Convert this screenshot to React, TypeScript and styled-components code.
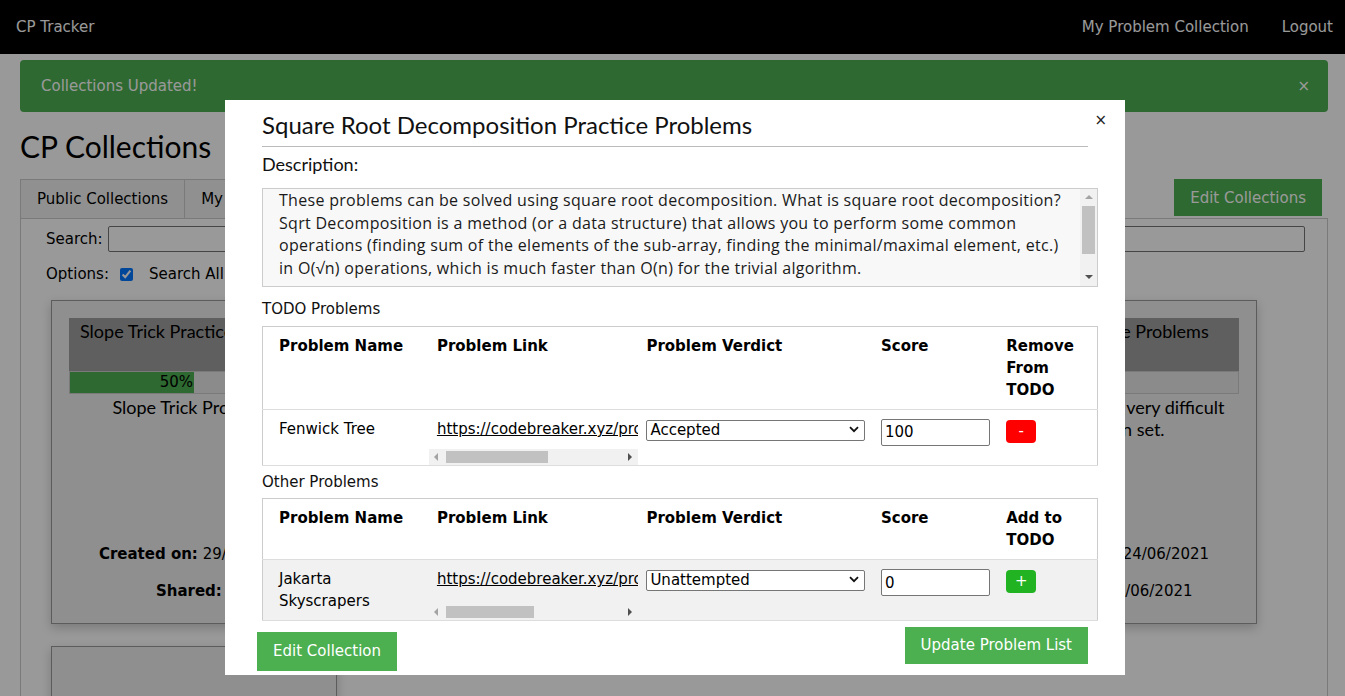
import React from "react";
import styled, { createGlobalStyle } from "styled-components";

const VERDANA = `Verdana, "DejaVu Sans", sans-serif`;
const SEGOE = `"Segoe UI", Lato, "Open Sans", sans-serif`;
const SEGOE_WIDE = `"Segoe UI", "Open Sans", sans-serif`;

const GlobalStyle = createGlobalStyle`
  *, *::before, *::after { box-sizing: border-box; }
  html, body { margin: 0; padding: 0; }
  body {
    font-family: ${VERDANA};
    font-size: 15px;
    line-height: 1.5;
    color: #000;
    background: #fff;
    overflow: hidden;
  }
`;

/* ---------- background page ---------- */

const Page = styled.div`
  width: 1345px;
  height: 696px;
  position: relative;
  overflow: hidden;
`;

const NavBar = styled.header`
  height: 54px;
  background: #000;
  color: #fff;
  display: flex;
  align-items: center;
  padding: 1px 12px 0 16px;
`;

const Brand = styled.span`
  flex: 1;
`;

const NavLinks = styled.nav`
  display: flex;
  gap: 33px;
`;

const NavLink = styled.span``;

const Main = styled.main`
  padding: 6px 17px 0 20px;
`;

const Alert = styled.div`
  height: 52px;
  background: #4caf50;
  color: #fff;
  border-radius: 4px;
  display: flex;
  align-items: center;
  justify-content: space-between;
  padding: 1px 18px 0 21px;
`;

const AlertClose = styled.span``;

const PageTitle = styled.h2`
  font-family: ${SEGOE};
  font-size: 30px;
  font-weight: 400;
  line-height: 36px;
  margin: 16px 0 15px;
`;

const TabRow = styled.div`
  display: flex;
  align-items: flex-start;
  margin-bottom: -1px;
  position: relative;
`;

const Tab = styled.div<{ $first?: boolean }>`
  height: 40px;
  display: flex;
  align-items: center;
  padding: 0 16px;
  background: #f1f1f1;
  border: 1px solid #ccc;
  border-left: ${(p) => (p.$first ? "1px solid #ccc" : "none")};
`;

const TabSpacer = styled.div`
  flex: 1;
`;

const GreenButton = styled.button`
  background: #4caf50;
  color: #fff;
  border: none;
  font-family: ${VERDANA};
  font-size: 15px;
  line-height: 22.5px;
  padding: 7px 16px;
`;

const TabButton = styled(GreenButton)`
  margin-right: 6px;
  height: 37px;
  padding-top: 8px;
  padding-bottom: 6px;
`;

const Panel = styled.section`
  border: 1px solid #ccc;
  padding: 7px 22px 0 25px;
  height: 480px;
`;

const SearchRow = styled.div`
  display: flex;
  align-items: center;
  gap: 5px;
`;

const SearchInput = styled.input`
  flex: 1;
  height: 26px;
  border: 1px solid #767676;
  border-radius: 2px;
  font-family: ${VERDANA};
  font-size: 15px;
`;

const OptionsRow = styled.div`
  display: flex;
  align-items: center;
  margin-top: 11px;
`;

const Check = styled.input`
  width: 13px;
  height: 13px;
  margin: 0 16px 0 11px;
`;

const CardGrid = styled.div`
  margin: 14px 0 0 5px;
  display: grid;
  grid-template-columns: repeat(4, 286px);
  column-gap: 20.67px;
  row-gap: 22px;
`;

const Card = styled.article`
  height: 324px;
  background: #eee;
  border: 1px solid #999;
  box-shadow: 0 4px 10px 0 rgba(0, 0, 0, 0.2);
  padding: 17px;
  display: flex;
  flex-direction: column;
`;

const CardHeader = styled.div`
  height: 53px;
  background: #9e9e9e;
  padding: 2px 11px;
  font-family: ${SEGOE};
  font-size: 18px;
  line-height: 22px;
  white-space: nowrap;
  overflow: hidden;
`;

const ProgressTrack = styled.div`
  height: 23px;
  background: #e8e8e8;
  border: 1px solid #ccc;
`;

const ProgressFill = styled.div`
  height: 100%;
  background: #4caf50;
  text-align: right;
  line-height: 21px;
  font-size: 15px;
  padding-right: 1px;
  white-space: nowrap;
`;

const CardDesc = styled.p`
  margin: 2px 0 0;
  text-align: center;
  font-family: ${SEGOE};
  font-size: 18px;
  line-height: 22px;
`;

const CardMeta = styled.div`
  margin-top: auto;
  margin-bottom: 3px;
  text-align: center;
`;

const MetaLine = styled.div`
  & + & {
    margin-top: 14.5px;
  }
`;

const MetaLabel = styled.b``;

/* ---------- modal ---------- */

const Overlay = styled.div`
  position: fixed;
  inset: 0;
  background: rgba(0, 0, 0, 0.4);
  padding-top: 100px;
  z-index: 10;
`;

const Modal = styled.div`
  position: relative;
  width: 900px;
  margin-left: calc(50% - 447.5px);
  background: #fff;
  padding: 11px 27px 4px 37px;
`;

const ModalClose = styled.span`
  position: absolute;
  top: 9px;
  right: 18px;
  font-size: 15px;
  line-height: 22px;
  color: #222;
`;

const ModalTitle = styled.h3`
  font-family: ${SEGOE};
  font-size: 24px;
  font-weight: 400;
  line-height: 28.8px;
  margin: 0;
  color: #111;
`;

const Rule = styled.hr`
  border: none;
  border-top: 1px solid #bbb;
  margin: 6px 10px 0 0;
`;

const DescLabel = styled.h5`
  font-family: ${SEGOE};
  font-size: 18px;
  font-weight: 400;
  line-height: 21.6px;
  margin: 7px 0 0;
  color: #111;
`;

const DescBox = styled.div`
  margin-top: 13px;
  height: 99px;
  border: 1px solid #ccc;
  background: #f8f8f8;
  display: flex;
`;

const DescText = styled.div`
  flex: 1;
  padding-left: 16px;
  font-family: ${SEGOE_WIDE};
  font-size: 16px;
  letter-spacing: 0.3px;
  line-height: 22.4px;
  color: #1a1a1a;
  overflow: hidden;
`;

const DescLine = styled.div`
  white-space: nowrap;
`;

const VTrack = styled.div`
  width: 17px;
  background: #f1f1f1;
  display: flex;
  flex-direction: column;
  align-items: center;
`;

const VThumb = styled.div`
  width: 13px;
  height: 48px;
  margin-top: 7px;
  background: #c1c1c1;
`;

const VSpacer = styled.div`
  flex: 1;
`;

const ArrowUp = styled.div`
  margin-top: 6px;
  width: 0;
  height: 0;
  border-left: 4px solid transparent;
  border-right: 4px solid transparent;
  border-bottom: 4px solid #a3a3a3;
`;

const ArrowDown = styled.div`
  margin-bottom: 7px;
  width: 0;
  height: 0;
  border-left: 4px solid transparent;
  border-right: 4px solid transparent;
  border-top: 4px solid #505050;
`;

const SectionLabel = styled.div<{ $mt: number }>`
  margin-top: ${(p) => p.$mt}px;
  line-height: 22.5px;
  color: #111;
`;

const Table = styled.table`
  width: 100%;
  margin-top: 5px;
  border-collapse: collapse;
  border: 1px solid #ccc;
  table-layout: fixed;
  line-height: 22px;
`;

const Col = styled.col<{ $w: number }>`
  width: ${(p) => p.$w}px;
`;

const HeadRow = styled.tr`
  border-bottom: 1px solid #ddd;
`;

const Th = styled.th`
  text-align: left;
  vertical-align: top;
  padding: 8px;
  font-weight: bold;
  &:first-child {
    padding-left: 16px;
  }
`;

const BodyRow = styled.tr<{ $striped?: boolean }>`
  border-bottom: 1px solid #ddd;
  background: ${(p) => (p.$striped ? "#f1f1f1" : "#fff")};
`;

const Td = styled.td`
  vertical-align: top;
  padding: 8px;
  &:first-child {
    padding-left: 16px;
  }
`;

const LinkTd = styled.td`
  vertical-align: top;
  padding: 8px 0 0;
`;

const LinkText = styled.div<{ $gap: number }>`
  padding-left: 8px;
  white-space: nowrap;
  overflow: hidden;
  margin-bottom: ${(p) => p.$gap}px;
  a {
    color: #000;
    text-decoration: underline;
  }
`;

const HTrack = styled.div`
  height: 16px;
  background: #f1f1f1;
  display: flex;
  align-items: center;
`;

const ArrowLeft = styled.div`
  margin-left: 5px;
  width: 0;
  height: 0;
  border-top: 4px solid transparent;
  border-bottom: 4px solid transparent;
  border-right: 4px solid #a3a3a3;
`;

const ArrowRight = styled.div`
  margin-left: auto;
  margin-right: 6px;
  width: 0;
  height: 0;
  border-top: 4px solid transparent;
  border-bottom: 4px solid transparent;
  border-left: 4px solid #505050;
`;

const HThumb = styled.div<{ $w: number }>`
  margin-left: 8px;
  width: ${(p) => p.$w}px;
  height: 12px;
  background: #c1c1c1;
`;

const SelectWrap = styled.div`
  position: relative;
  margin-top: 1px;
  height: 21px;
`;

const Select = styled.select`
  appearance: none;
  width: 100%;
  height: 21px;
  border: 1px solid #767676;
  border-radius: 2px;
  background: #fff;
  font-family: ${VERDANA};
  font-size: 15px;
  line-height: 19px;
  padding: 0 20px 0 3px;
  color: #000;
`;

const Chevron = styled.svg`
  position: absolute;
  right: 6px;
  top: 7px;
  pointer-events: none;
`;

const ScoreInput = styled.input`
  display: block;
  margin-top: 1px;
  width: 100%;
  height: 27px;
  border: 1px solid #767676;
  border-radius: 2px;
  padding: 1px 3px;
  font-family: ${VERDANA};
  font-size: 15px;
  color: #000;
`;

const SmallButton = styled.button<{ $bg: string }>`
  display: block;
  margin-top: 2px;
  width: 30px;
  height: 23px;
  border: none;
  border-radius: 4px;
  background: ${(p) => p.$bg};
  color: #fff;
  font-family: ${VERDANA};
  font-size: 15px;
  line-height: 1;
  padding: 0;
`;

const Footer = styled.div`
  display: flex;
  justify-content: space-between;
  align-items: flex-start;
`;

const EditButton = styled(GreenButton)`
  padding: 8px 16px;
  margin: 11px 0 0 -5px;
`;

const UpdateButton = styled(GreenButton)`
  padding: 7px 16px;
  margin: 6px 10px 0 0;
`;

/* ---------- data ---------- */

type CardData = {
  title: string;
  progress: number;
  desc: string;
  created: string;
  shared: string;
};

const cards: CardData[] = [
  { title: "Slope Trick Practice", progress: 50, desc: "Slope Trick Problems", created: "29/06/2021", shared: "-" },
  { title: "Segment Tree Practice", progress: 30, desc: "Segment tree problems.", created: "28/06/2021", shared: "28/06/2021" },
  { title: "Graph Theory Practice", progress: 10, desc: "Graph problems.", created: "26/06/2021", shared: "26/06/2021" },
  { title: "Hardest Practice Problems", progress: 20, desc: "These are very, very difficult question set.", created: "24/06/2021", shared: "24/06/2021" },
];

const descLines = [
  "These problems can be solved using square root decomposition. What is square root decomposition?",
  "Sqrt Decomposition is a method (or a data structure) that allows you to perform some common",
  "operations (finding sum of the elements of the sub-array, finding the minimal/maximal element, etc.)",
  "in O(\u221An) operations, which is much faster than O(n) for the trivial algorithm.",
];

type Row = {
  name: string;
  link: string;
  verdict: string;
  score: string;
  thumb: number;
  gap: number;
};

const todoRows: Row[] = [
  { name: "Fenwick Tree", link: "https://codebreaker.xyz/problem/fenwick", verdict: "Accepted", score: "100", thumb: 102, gap: 9 },
];

const otherRows: Row[] = [
  { name: "Jakarta Skyscrapers", link: "https://codebreaker.xyz/problem/jakartaskyscrapers", verdict: "Unattempted", score: "0", thumb: 88, gap: 14 },
];

const colWidths = [166, 209, 234, 125, 99];

const CollectionCard = ({ c }: { c: CardData }) => (
  <Card>
    <CardHeader>{c.title}</CardHeader>
    <ProgressTrack>
      {c.progress > 0 && <ProgressFill style={{ width: `${c.progress}%` }}>{c.progress}%</ProgressFill>}
    </ProgressTrack>
    <CardDesc>{c.desc}</CardDesc>
    <CardMeta>
      <MetaLine>
        <MetaLabel>Created on:</MetaLabel> {c.created}
      </MetaLine>
      <MetaLine>
        <MetaLabel>Shared:</MetaLabel> {c.shared}
      </MetaLine>
    </CardMeta>
  </Card>
);

const ProblemTable = ({ rows, actionLabel, action }: { rows: Row[]; actionLabel: string; action: "remove" | "add" }) => (
  <Table>
    <colgroup>
      {colWidths.map((w, i) => (
        <Col key={i} $w={w} />
      ))}
    </colgroup>
    <thead>
      <HeadRow>
        <Th>Problem Name</Th>
        <Th>Problem Link</Th>
        <Th>Problem Verdict</Th>
        <Th>Score</Th>
        <Th>{actionLabel}</Th>
      </HeadRow>
    </thead>
    <tbody>
      {rows.map((r) => (
        <BodyRow key={r.name} $striped={action === "add"}>
          <Td>{r.name}</Td>
          <LinkTd>
            <LinkText $gap={r.gap}>
              <a href="#">{r.link}</a>
            </LinkText>
            <HTrack>
              <ArrowLeft />
              <HThumb $w={r.thumb} />
              <ArrowRight />
            </HTrack>
          </LinkTd>
          <Td>
            <SelectWrap>
              <Select defaultValue={r.verdict}>
                <option>Unattempted</option>
                <option>Attempted</option>
                <option>Accepted</option>
              </Select>
              <Chevron width="10" height="7" viewBox="0 0 10 7">
                <path d="M1 1.2 L5 5.2 L9 1.2" stroke="#111" strokeWidth="1.8" fill="none" />
              </Chevron>
            </SelectWrap>
          </Td>
          <Td>
            <ScoreInput defaultValue={r.score} />
          </Td>
          <Td>
            {action === "remove" ? (
              <SmallButton $bg="#ff0000">-</SmallButton>
            ) : (
              <SmallButton $bg="#21b321">+</SmallButton>
            )}
          </Td>
        </BodyRow>
      ))}
    </tbody>
  </Table>
);

export default function App() {
  return (
    <Page>
      <GlobalStyle />
      <NavBar>
        <Brand>CP Tracker</Brand>
        <NavLinks>
          <NavLink>My Problem Collection</NavLink>
          <NavLink>Logout</NavLink>
        </NavLinks>
      </NavBar>
      <Main>
        <Alert>
          <span>Collections Updated!</span>
          <AlertClose>×</AlertClose>
        </Alert>
        <PageTitle>CP Collections</PageTitle>
        <TabRow>
          <Tab $first>Public Collections</Tab>
          <Tab>My Collections</Tab>
          <TabSpacer />
          <TabButton>Edit Collections</TabButton>
        </TabRow>
        <Panel>
          <SearchRow>
            <span>Search:</span>
            <SearchInput />
          </SearchRow>
          <OptionsRow>
            <span>Options:</span>
            <Check type="checkbox" defaultChecked />
            <span>Search All Fields</span>
          </OptionsRow>
          <CardGrid>
            {cards.map((c) => (
              <CollectionCard key={c.title} c={c} />
            ))}
            <Card />
          </CardGrid>
        </Panel>
      </Main>

      <Overlay>
        <Modal>
          <ModalClose>×</ModalClose>
          <ModalTitle>Square Root Decomposition Practice Problems</ModalTitle>
          <Rule />
          <DescLabel>Description:</DescLabel>
          <DescBox>
            <DescText>
              {descLines.map((l) => (
                <DescLine key={l}>{l}</DescLine>
              ))}
            </DescText>
            <VTrack>
              <ArrowUp />
              <VThumb />
              <VSpacer />
              <ArrowDown />
            </VTrack>
          </DescBox>
          <SectionLabel $mt={11}>TODO Problems</SectionLabel>
          <ProblemTable rows={todoRows} actionLabel="Remove From TODO" action="remove" />
          <SectionLabel $mt={5}>Other Problems</SectionLabel>
          <ProblemTable rows={otherRows} actionLabel="Add to TODO" action="add" />
          <Footer>
            <EditButton>Edit Collection</EditButton>
            <UpdateButton>Update Problem List</UpdateButton>
          </Footer>
        </Modal>
      </Overlay>
    </Page>
  );
}
